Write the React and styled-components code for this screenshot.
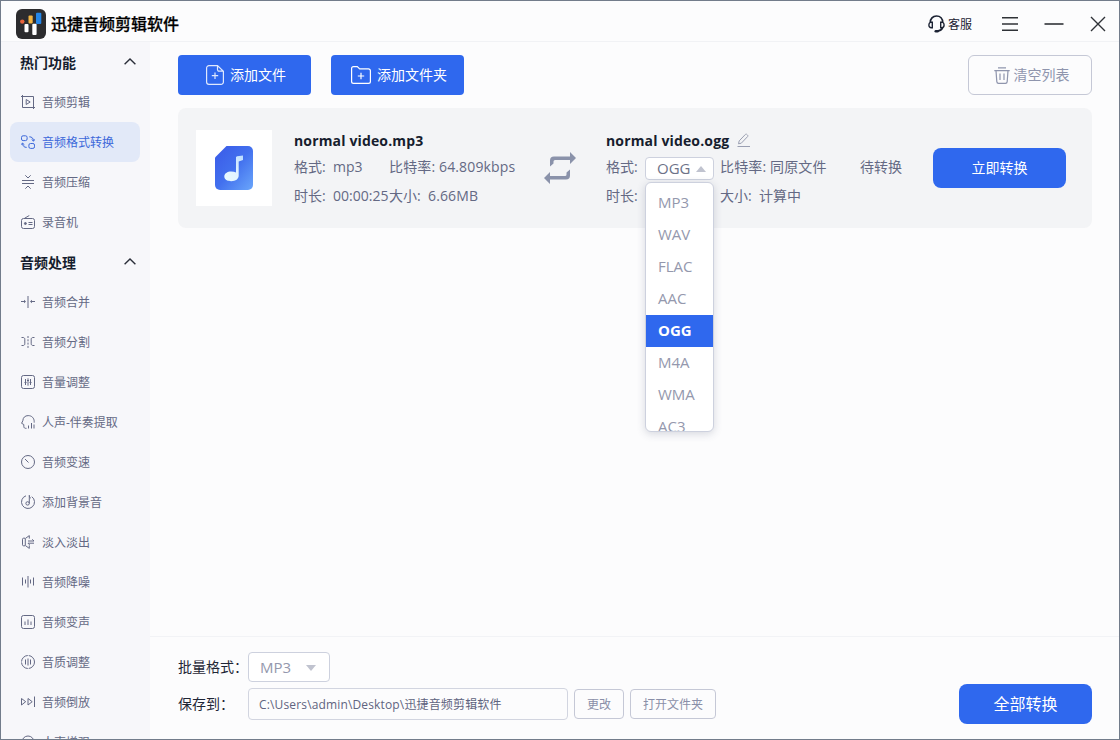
import styled, { createGlobalStyle, css } from 'styled-components';

const GlobalStyle = createGlobalStyle`
  * {
    box-sizing: border-box;
  }

  body {
    margin: 0;
    overflow: hidden;
    font-family: "Open Sans", "Noto Sans CJK SC", sans-serif;
  }

  button {
    font-family: inherit;
    padding: 0;
    cursor: pointer;
  }
`;

const icons = {
  clip: (
    <>
      <path d="M0 1.5h12.500V14M1.500 0v12.500H14" />
      <path d="M5.200 4.500v5L9.200 7z" />
    </>
  ),
  convert: (
    <>
      <rect x="0.5" y="0.8" width="5.6" height="4.8" rx="1.6" />
      <rect x="7.9" y="8.5" width="5.6" height="4.9" rx="1.6" />
      <path d="M8.3 1.8c2.6 0 4 1.4 4.2 4M10.6 4.4l1.9 1.8L14 4.2M5.7 12.4c-2.6 0-4-1.4-4.2-4M0 9.8L1.5 8l1.9 1.8" />
    </>
  ),
  compress: <path d="M1 5.500h12M1 8.500h12M4.300 0.300L7 3l2.700-2.700M4.300 13.700L7 11l2.700 2.700" />,
  radio: (
    <>
      <rect x="0.5" y="3.5" width="13" height="10" rx="2" />
      <path d="M3.500 3.300L8.300 0.500M7.500 7.500h4M7.500 9.500h4" />
      <circle cx="4.4" cy="8.500" r="1" fill="currentColor" />
    </>
  ),
  merge: (
    <>
      <path d="M7 1v12M0 6.500h3M14 6.500h-3" />
      <path d="M3 4.700v3.600l2-1.800zM11 4.700v3.600L9 6.500z" fill="currentColor" stroke="none" />
    </>
  ),
  split: (
    <>
      <path d="M0.5 2.500h1.6c1 0 1.7.7 1.7 1.7v4.600c0 1-.7 1.700-1.700 1.700H.5M13.500 2.500h-1.600c-1 0-1.700.7-1.700 1.700v4.600c0 1 .7 1.700 1.700 1.700h1.600" />
      <path d="M7 1v12" strokeDasharray="2 1.3" />
    </>
  ),
  volume: (
    <>
      <rect x="0.5" y="0.5" width="13" height="13" rx="2" />
      <path d="M4.500 4v6M7 3.300v7.400M9.500 4v6M3.500 7.500h2M6 5.500h2M8.500 7.500h2" />
    </>
  ),
  voice: (
    <path d="M5.5 13.3c-1.8.2-2.7-.4-2.7-2V9.5L0.6 8.3l1.2-2.500C2 2.500 4 .6 7.200.6c3.600 0 6 2.500 6 6v1M7.500 13.500v-3M10.500 13.500V8M13 13.500v-4" />
  ),
  speed: (
    <>
      <circle cx="7" cy="7" r="6.5" />
      <path d="M4 4l3.500 3.500" />
    </>
  ),
  music: (
    <>
      <path d="M5 .8A6.500 6.500 0 1 0 10.800 1.700" />
      <circle cx="6.600" cy="8.400" r="1.700" />
      <path d="M8.300 8.400V.3c0 1.500.5 2.300 1.500 2.900" />
    </>
  ),
  fade: (
    <>
      <path d="M4.300 3.200H2.500c-.6 0-1 .4-1 1v5.600c0 .6.4 1 1 1h1.800zM5 3L8.300.6v3M5 11l3.300 2.400v-3" />
      <path d="M7 6h6l-1.700-1.700M13 8.200H7l1.700 1.700" />
    </>
  ),
  denoise: <path d="M1.500 2.500v8M4.500 4.500v4M7 1v11.500M9.500 4.500v4M12.500 2.500v8" />,
  change: (
    <>
      <rect x="0.500" y="0.500" width="13" height="13" rx="2" />
      <path d="M4 6.500V10M7 4.500V10M10 6.500V10" />
    </>
  ),
  quality: (
    <>
      <circle cx="7" cy="7" r="6.500" strokeDasharray="9.200 1" />
      <path d="M4.500 4.500v5M7 3.500v7M9.500 4.500v5" />
    </>
  ),
  reverse: <path d="M.5 3.500v6.500L4.700 6.700zM7 3.500v6.500l4.200-3.300zM13.500 1.500v10.500" />,
  enhance: <circle cx="7" cy="7" r="6" />,
};

const groups = [
  {
    title: '热门功能',
    items: [
      { icon: 'clip', label: '音频剪辑' },
      { icon: 'convert', label: '音频格式转换', active: true },
      { icon: 'compress', label: '音频压缩' },
      { icon: 'radio', label: '录音机' },
    ],
  },
  {
    title: '音频处理',
    items: [
      { icon: 'merge', label: '音频合并' },
      { icon: 'split', label: '音频分割' },
      { icon: 'volume', label: '音量调整' },
      { icon: 'voice', label: '人声-伴奏提取' },
      { icon: 'speed', label: '音频变速' },
      { icon: 'music', label: '添加背景音' },
      { icon: 'fade', label: '淡入淡出' },
      { icon: 'denoise', label: '音频降噪' },
      { icon: 'change', label: '音频变声' },
      { icon: 'quality', label: '音质调整' },
      { icon: 'reverse', label: '音频倒放' },
      { icon: 'enhance', label: '人声增强' },
    ],
  },
];

const formats = ['MP3', 'WAV', 'FLAC', 'AAC', 'OGG', 'M4A', 'WMA', 'AC3'];

function Logo() {
  return (
    <svg width="30" height="30" viewBox="0 0 30 30">
      <rect width="30" height="30" rx="6" fill="#2c2c2e" />
      <circle cx="6.300" cy="12.600" r="2.200" fill="#e8643c" />
      <rect x="8.500" y="15" width="4" height="8.300" rx="1" fill="#fff" />
      <rect x="12.500" y="6.500" width="4.200" height="8" rx="1" fill="#f3b440" />
      <rect x="16.300" y="14.800" width="4.300" height="11.200" rx="1" fill="#fff" />
      <rect x="20" y="3.700" width="5.300" height="11.300" rx="1" fill="#2486e8" />
    </svg>
  );
}

function FileArt() {
  return (
    <svg width="38" height="44" viewBox="0 0 38 44">
      <defs>
        <linearGradient id="sheet" x1="0" y1="0" x2="1" y2="1">
          <stop offset="0" stopColor="#3a5ae8" />
          <stop offset="0.500" stopColor="#4270ee" />
          <stop offset="1" stopColor="#6aa6fb" />
        </linearGradient>
        <linearGradient id="note" x1="1" y1="0" x2="0" y2="1">
          <stop offset="0" stopColor="#b9dcff" />
          <stop offset="0.500" stopColor="#e2f3ff" />
          <stop offset="1" stopColor="#e8fbff" />
        </linearGradient>
      </defs>
      <path d="M11.500 0H33a5 5 0 0 1 5 5v34a5 5 0 0 1-5 5H5a5 5 0 0 1-5-5V11.500z" fill="url(#sheet)" />
      <path
        d="M21 11.500c0-.7.500-1.200 1.200-1.300l5.800-.7v4.500l-4.300 1.400v14.100c0 3.500-3 5.700-7.400 5.700-4 0-7-1.700-7-4.700s3-5 7-5c1.800 0 3.400.4 4.700 1z"
        fill="url(#note)"
      />
    </svg>
  );
}

function Chevron() {
  return (
    <svg width="12" height="7" viewBox="0 0 12 7" fill="none" stroke="#2b2f3a" strokeWidth="1.400">
      <path d="M.6 6.200L6 1l5.400 5.200" />
    </svg>
  );
}

function App() {
  return (
    <Window>
      <GlobalStyle />
      <TitleBar>
        <Logo />
        <AppName>迅捷音频剪辑软件</AppName>
        <Service>
          <svg width="17" height="18" viewBox="0 0 17 18" fill="none" stroke="#1b2233" strokeWidth="1.700">
            <path d="M2.300 7.500C2.300 3.700 4.700 1 8.500 1s6.200 2.700 6.200 6.500M14.700 12.500c-.8 2.200-2.600 3.400-5.200 3.600" />
            <path d="M2.300 7.300h2v5.400h-1c-1.500 0-2.400-1-2.400-2.700s.500-2.400 1.400-2.700zM14.700 7.300h-2v5.400h1c1.500 0 2.400-1 2.400-2.700s-.500-2.400-1.400-2.700z" strokeWidth="1.400" />
            <rect x="6.500" y="15" width="4.300" height="2.600" rx="1.300" fill="#1b2233" stroke="none" />
          </svg>
          客服
        </Service>
        <WindowControls>
          <svg width="16" height="16" viewBox="0 0 16 16" stroke="#2f3237" strokeWidth="1.500">
            <path d="M0 1.700h16M0 8h16M0 14.300h16" />
          </svg>
          <svg width="20" height="16" viewBox="0 0 20 16" stroke="#2f3237" strokeWidth="1.600">
            <path d="M.5 8h19" />
          </svg>
          <svg width="16" height="16" viewBox="0 0 16 16" stroke="#2f3237" strokeWidth="1.400">
            <path d="M1 1l14 14M15 1L1 15" />
          </svg>
        </WindowControls>
      </TitleBar>

      <Body>
        <Sidebar>
          {groups.map((group) => (
            <div key={group.title}>
              <GroupTitle>
                {group.title}
                <Chevron />
              </GroupTitle>
              {group.items.map((item) => (
                <NavItem key={item.label} $active={item.active}>
                  <NavIcon viewBox="0 0 14 14">{icons[item.icon]}</NavIcon>
                  {item.label}
                </NavItem>
              ))}
            </div>
          ))}
        </Sidebar>

        <Main>
          <Toolbar>
            <PrimaryButton>
              <svg width="18" height="20" viewBox="0 0 18 20" fill="none" stroke="#fff" strokeOpacity="0.850" strokeWidth="1.200">
                <path d="M11.500.6H3A2.400 2.400 0 0 0 .6 3v14A2.400 2.400 0 0 0 3 19.400h12a2.400 2.400 0 0 0 2.400-2.400V6.200zM11.500.6v4a1.600 1.600 0 0 0 1.600 1.600h4.300M9 7.500v6.400M5.800 10.700h6.400" />
              </svg>
              <ButtonText>添加文件</ButtonText>
            </PrimaryButton>
            <PrimaryButton>
              <svg width="20" height="18" viewBox="0 0 20 18" fill="none" stroke="#fff" strokeWidth="1.200">
                <path d="M.6 15.500v-13A1.900 1.900 0 0 1 2.500.6h3.800l2.400 2.300h8.800a1.900 1.900 0 0 1 1.900 1.900v10.700a1.900 1.900 0 0 1-1.900 1.900h-15A1.900 1.900 0 0 1 .6 15.500zM10 6.800v6.400M6.800 10h6.400" />
              </svg>
              <ButtonText>添加文件夹</ButtonText>
            </PrimaryButton>
            <ClearButton>
              <svg width="16" height="17" viewBox="0 0 16 17" fill="none" stroke="#8f95ad" strokeWidth="1.200">
                <path d="M4 .8h8M.3 3.600h15.400M2 3.600l.8 11c.1 1 .7 1.700 1.700 1.700h7c1 0 1.600-.7 1.700-1.700l.8-11M6 6.500v6.500M10 6.500v6.500" />
              </svg>
              <ButtonText>清空列表</ButtonText>
            </ClearButton>
          </Toolbar>

          <FileCard>
            <Thumb>
              <FileArt />
            </Thumb>
            <Info $width="250px">
              <FileName>normal video.mp3</FileName>
              <InfoRow $columns="39px 56px auto">
                <span>格式:</span>
                <span>mp3</span>
                <Wide>比特率: 64.809kbps</Wide>
              </InfoRow>
              <InfoRow $columns="39px 56px 39px auto">
                <span>时长:</span>
                <span>00:00:25</span>
                <span>大小:</span>
                <Wide>6.66MB</Wide>
              </InfoRow>
            </Info>
            <SwapIcon viewBox="0 0 32 32">
              <path d="M6 14.500V8.500a4 4 0 0 1 4-4h16V0l6 6-6 6V8H11a1.500 1.500 0 0 0-1.500 1.500v2z" />
              <path d="M26 17.500v6a4 4 0 0 1-4 4H6V32l-6-6 6-6v4h15a1.500 1.500 0 0 0 1.500-1.500v-2z" />
            </SwapIcon>
            <Info $width="254px">
              <FileName>
                normal video.ogg
                <svg width="13" height="14" viewBox="0 0 13 14" fill="none" stroke="#9a9fb2">
                  <path d="M.5 13.500H13M1.500 10.800l.7-2.900L8.300 1.500c.5-.5 1.100-.5 1.600 0l.6.6c.5.5.5 1.100 0 1.600l-6.200 6.500z" />
                </svg>
              </FileName>
              <InfoRow $columns="39px 75px auto">
                <span>格式:</span>
                <SelectAnchor>
                  <Select $open>
                    OGG
                    <Caret $up />
                  </Select>
                  <Menu>
                    {formats.map((format) => (
                      <Option key={format} $selected={format === 'OGG'}>
                        {format}
                      </Option>
                    ))}
                  </Menu>
                </SelectAnchor>
                <Wide>比特率: 同原文件</Wide>
              </InfoRow>
              <InfoRow $columns="114px 39px auto">
                <span>时长:</span>
                <span>大小:</span>
                <span>计算中</span>
              </InfoRow>
            </Info>
            <Status>待转换</Status>
            <ConvertButton>
              <ButtonText>立即转换</ButtonText>
            </ConvertButton>
          </FileCard>

          <Footer>
            <Settings>
              <SettingRow>
                <Label>批量格式：</Label>
                <Select>
                  MP3
                  <Caret />
                </Select>
              </SettingRow>
              <SettingRow>
                <Label>保存到：</Label>
                <PathBox>C:\Users\admin\Desktop\迅捷音频剪辑软件</PathBox>
                <SmallButton $width="50px">更改</SmallButton>
                <SmallButton $width="86px">打开文件夹</SmallButton>
              </SettingRow>
            </Settings>
            <ConvertButton $large>
              <ButtonText>全部转换</ButtonText>
            </ConvertButton>
          </Footer>
        </Main>
      </Body>
    </Window>
  );
}

export default App;

const Window = styled.div`
  display: flex;
  flex-direction: column;
  width: 1120px;
  height: 740px;
  overflow: hidden;
  border: 1px solid #727c8b;
  background: #fcfcfd;
  color: #646984;
`;

const TitleBar = styled.header`
  display: flex;
  align-items: center;
  flex: none;
  height: 41px;
  padding: 5px 13px 0 15px;
  border-bottom: 1px solid #f1f2f5;
`;

const AppName = styled.h1`
  margin: 0 0 0 5px;
  font-size: 16px;
  font-weight: 500;
  line-height: 24px;
  color: #000;
  -webkit-text-stroke: 0.25px #000;
`;

const Service = styled.div`
  display: flex;
  align-items: center;
  gap: 3px;
  margin-left: auto;
  font-size: 12px;
  color: #1b2233;
`;

const WindowControls = styled.div`
  display: flex;
  align-items: center;
  gap: 26px;
  margin-left: 30px;
`;

const Body = styled.div`
  display: flex;
  flex: 1;
  min-height: 0;
`;

const Sidebar = styled.nav`
  flex: none;
  width: 149px;
  overflow: hidden;
  padding: 0 10px 0 9px;
  background: #f7f7fa;
`;

const GroupTitle = styled.div`
  display: flex;
  align-items: center;
  justify-content: space-between;
  height: 40px;
  padding: 0 4px 1px 10px;
  font-size: 14px;
  font-weight: 600;
  color: #161d2e;
`;

const NavItem = styled.a`
  display: flex;
  align-items: center;
  gap: 7px;
  height: 40px;
  padding-left: 11px;
  border-radius: 8px;
  font-size: 12px;
  white-space: nowrap;
  color: #646984;
  ${(props) =>
    props.$active &&
    css`
      background: #e2e9f8;
      color: #3c68da;
    `}
`;

const NavIcon = styled.svg`
  flex: none;
  width: 14px;
  height: 14px;
  fill: none;
  stroke: currentColor;
  stroke-width: 1;
`;

const Main = styled.main`
  display: flex;
  flex-direction: column;
  flex: 1;
  min-width: 0;
`;

const Toolbar = styled.div`
  display: flex;
  gap: 20px;
  padding: 13px 27px 13px 28px;
`;

const ButtonText = styled.span`
  display: inline-block;
  padding-bottom: 2px;
`;

const PrimaryButton = styled.button`
  display: flex;
  align-items: center;
  justify-content: center;
  gap: 6px;
  width: 133px;
  height: 40px;
  padding-left: 3px;
  border: none;
  border-radius: 4px;
  background: #2f68ee;
  font-size: 14px;
  color: #fff;
`;

const ClearButton = styled.button`
  display: flex;
  align-items: center;
  justify-content: center;
  gap: 4px;
  width: 124px;
  height: 40px;
  margin-left: auto;
  padding-left: 3px;
  border: 1px solid #c5c8d6;
  border-radius: 6px;
  background: transparent;
  font-size: 14px;
  color: #8f95ad;
`;

const FileCard = styled.section`
  display: flex;
  align-items: center;
  height: 120px;
  margin: 0 27px 0 28px;
  padding: 0 26px 0 18px;
  border-radius: 8px;
  background: #f3f4f6;
`;

const Thumb = styled.div`
  display: flex;
  align-items: center;
  justify-content: center;
  flex: none;
  width: 76px;
  height: 76px;
  margin-right: 22px;
  background: #fff;
`;

const Info = styled.div`
  flex: none;
  width: ${(props) => props.$width};
  font-size: 14px;
  white-space: nowrap;
`;

const FileName = styled.div`
  display: flex;
  align-items: center;
  gap: 8px;
  height: 26px;
  font-size: 14px;
  font-weight: 700;
  letter-spacing: 0.15px;
  color: #161d2e;
`;

const InfoRow = styled.div`
  display: grid;
  grid-template-columns: ${(props) => props.$columns};
  align-items: center;
  height: 28px;
  line-height: 19px;

  &:nth-child(2) {
    height: 27px;
    margin-bottom: 1px;
  }
`;

const Wide = styled.span`
  letter-spacing: 0.14px;
`;

const SwapIcon = styled.svg`
  flex: none;
  width: 32px;
  height: 32px;
  margin-right: 30px;
  fill: #8a92aa;
`;

const SelectAnchor = styled.div`
  position: relative;
  width: 69px;
  margin-top: 4px;
`;

const Select = styled.div`
  display: flex;
  align-items: center;
  justify-content: space-between;
  width: ${(props) => (props.$open ? '69px' : '82px')};
  height: ${(props) => (props.$open ? '23px' : '30px')};
  padding: ${(props) => (props.$open ? '0 7px 1px 11px' : '0 13px 0 11px')};
  border: 1px solid #cdd1de;
  border-radius: 4px;
  background: #fff;
  font-size: 15px;
  color: ${(props) => (props.$open ? '#6d7288' : '#9498ad')};
`;

const Caret = styled.i`
  margin-top: 1px;
  border: 5.5px solid transparent;
  border-top: ${(props) => (props.$up ? 'none' : '6px solid #c0c3cf')};
  border-bottom: ${(props) => (props.$up ? '6px solid #c0c3cf' : 'none')};
`;

const Menu = styled.div`
  position: absolute;
  top: 25px;
  left: 0;
  z-index: 2;
  width: 69px;
  height: 250px;
  overflow: hidden;
  padding-top: 4px;
  border: 1px solid #cdd1de;
  border-radius: 6px;
  background: #fff;
  box-shadow: 0 2px 8px rgba(60, 70, 100, 0.2);
`;

const Option = styled.div`
  height: 32px;
  padding-left: 12px;
  font-size: 15px;
  line-height: 30px;
  color: ${(props) => (props.$selected ? '#fff' : '#9498ad')};
  background: ${(props) => (props.$selected ? '#2f68ee' : 'transparent')};
  font-weight: ${(props) => (props.$selected ? 700 : 400)};
`;

const Status = styled.span`
  padding-bottom: 4px;
  font-size: 14px;
  white-space: nowrap;
`;

const ConvertButton = styled.button`
  width: 133px;
  height: 40px;
  margin-left: auto;
  border: none;
  border-radius: 8px;
  background: #2f68ee;
  font-size: ${(props) => (props.$large ? '16px' : '14px')};
  color: #fff;
`;

const Footer = styled.footer`
  display: flex;
  align-items: flex-end;
  height: 103px;
  margin-top: auto;
  padding: 0 27px 15px 28px;
  border-top: 1px solid #f2f3f6;
`;

const Settings = styled.div`
  display: flex;
  flex-direction: column;
  gap: 6px;
  padding-bottom: 4px;
`;

const SettingRow = styled.div`
  display: flex;
  align-items: center;
  gap: 6px;
`;

const Label = styled.label`
  width: 64px;
  padding-bottom: 2px;
  font-size: 14px;
  white-space: nowrap;
  color: #1f2636;
`;

const PathBox = styled.div`
  width: 320px;
  height: 32px;
  padding-left: 10px;
  border: 1px solid #d2d5e0;
  border-radius: 4px;
  font-size: 12px;
  line-height: 31px;
  letter-spacing: 0.15px;
  color: #5f6480;
`;

const SmallButton = styled.button`
  width: ${(props) => props.$width};
  height: 30px;
  border: 1px solid #c5c8d6;
  border-radius: 4px;
  background: transparent;
  font-size: 12px;
  color: #8a8fa8;
`;
